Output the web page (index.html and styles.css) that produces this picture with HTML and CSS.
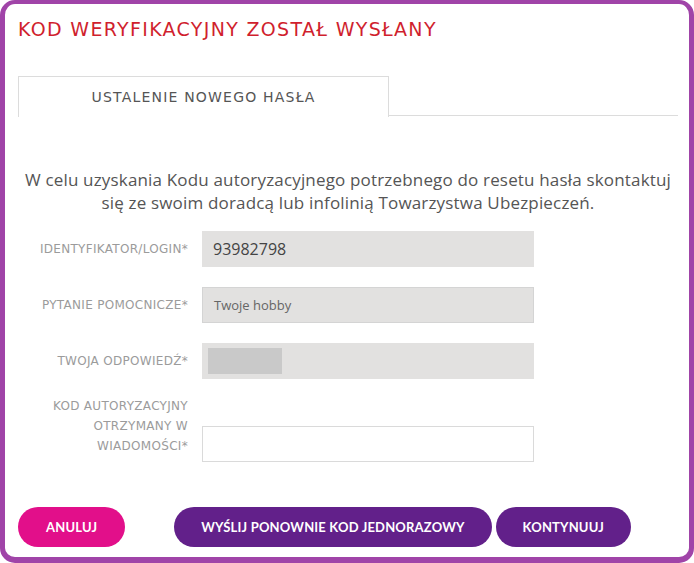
FILE: index.html
```html
<!DOCTYPE html>
<html lang="pl">
<head>
<meta charset="utf-8">
<title>Kod weryfikacyjny</title>
<link rel="stylesheet" href="styles.css">
</head>
<body>
<div class="frame">
  <h1 class="title">KOD WERYFIKACYJNY ZOSTAŁ WYSŁANY</h1>
  <div class="tabs">
    <div class="tab">USTALENIE NOWEGO HASŁA</div>
    <div class="tab-rest"></div>
  </div>
  <p class="info">W celu uzyskania Kodu autoryzacyjnego potrzebnego do resetu hasła skontaktuj<br>się ze swoim doradcą lub infolinią Towarzystwa Ubezpieczeń.</p>
  <div class="form">
    <div class="row">
      <div class="label">IDENTYFIKATOR/LOGIN*</div>
      <div class="field field-grey"><span class="val-big">93982798</span></div>
    </div>
    <div class="row">
      <div class="label">PYTANIE POMOCNICZE*</div>
      <div class="field field-grey field-bordered"><span class="val-small">Twoje hobby</span></div>
    </div>
    <div class="row">
      <div class="label">TWOJA ODPOWIEDŹ*</div>
      <div class="field field-grey"><span class="mask"></span></div>
    </div>
    <div class="row row-end">
      <div class="label label-multi">KOD AUTORYZACYJNY<br>OTRZYMANY W<br>WIADOMOŚCI*</div>
      <div class="field field-white"></div>
    </div>
  </div>
  <div class="actions">
    <button class="btn btn-pink">ANULUJ</button>
    <button class="btn btn-purple btn-resend">WYŚLIJ PONOWNIE KOD JEDNORAZOWY</button>
    <button class="btn btn-purple">KONTYNUUJ</button>
  </div>
</div>
</body>
</html>
```

FILE: styles.css
```css
html, body {
  margin: 0;
  padding: 0;
  background: #ffffff;
}
.frame {
  box-sizing: border-box;
  width: 694px;
  height: 563px;
  border-style: solid;
  border-color: #a044a8;
  border-width: 4px 5px 6px 5px;
  border-radius: 15px;
  background: #fff;
  padding: 0 11px 0 13px;
  display: flex;
  flex-direction: column;
}
.title {
  margin: 13px 0 0 0;
  font-family: "DejaVu Sans", sans-serif;
  font-weight: normal;
  font-size: 19px;
  line-height: 24px;
  letter-spacing: 1.32px;
  color: #d01f2e;
}
.tabs {
  display: flex;
  margin-top: 35px;
  height: 40px;
}
.tab {
  box-sizing: border-box;
  width: 371px;
  height: 41px;
  border: 1px solid #dcdcdc;
  border-bottom: none;
  display: flex;
  align-items: center;
  justify-content: center;
  font-family: "DejaVu Sans", sans-serif;
  font-size: 14px;
  letter-spacing: 1.2px;
  color: #555;
  background: #fff;
}
.tab-rest {
  flex: 1;
  border-bottom: 1px solid #dcdcdc;
}
.info {
  margin: 52px 0 0 0;
  text-align: center;
  font-family: "Open Sans", sans-serif;
  font-size: 17px;
  line-height: 23px;
  letter-spacing: 0.17px;
  color: #555;
}
.form {
  margin-top: 17px;
  display: flex;
  flex-direction: column;
  gap: 20px;
}
.row {
  display: flex;
  align-items: center;
  gap: 14px;
}
.row-end {
  align-items: flex-end;
  margin-top: -3px;
}
.label {
  width: 170px;
  text-align: right;
  font-family: "DejaVu Sans", sans-serif;
  font-size: 12px;
  letter-spacing: 0.3px;
  color: #9b9b9b;
  line-height: 20px;
}
.label-multi {
  padding-bottom: 6px;
}
.field {
  box-sizing: border-box;
  width: 332px;
  height: 36px;
  display: flex;
  align-items: center;
  padding-left: 11px;
}
.field-grey {
  background: #e2e1e0;
}
.field-bordered {
  border: 1px solid #d4d4d4;
}
.field-white {
  background: #fff;
  border: 1px solid #dadada;
}
.val-big {
  font-family: "Open Sans", sans-serif;
  font-size: 16px;
  color: #444;
}
.val-small {
  font-family: "Open Sans", sans-serif;
  font-size: 13px;
  color: #666;
}
.mask {
  display: block;
  width: 74px;
  height: 26px;
  margin-left: -5px;
  background: #c9c9c9;
}
.actions {
  margin-top: auto;
  margin-bottom: 10px;
  display: flex;
  gap: 4px;
}
.btn {
  height: 40px;
  border: none;
  border-radius: 20px;
  padding: 0 27px;
  font-family: "Lato", sans-serif;
  font-weight: bold;
  font-size: 13px;
  letter-spacing: 0.18px;
  color: #fff;
}
.btn-pink {
  background: #e20f8a;
  padding: 0 28px;
}
.btn-purple {
  background: #62208a;
}
.btn-resend {
  margin-left: 45px;
}
```
